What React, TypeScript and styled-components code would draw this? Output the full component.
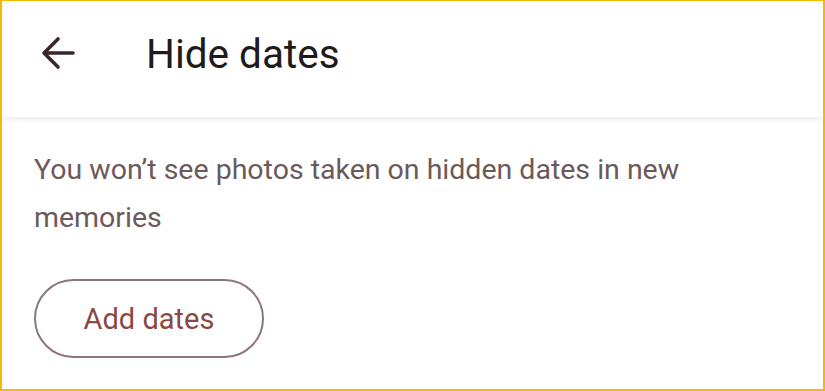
import React from 'react'
import styled, { createGlobalStyle } from 'styled-components'

// G L O B A L
const GlobalStyle = createGlobalStyle`
  html, body {
    margin: 0;
    padding: 0;
    background: #ffffff;
  }

  body {
    font-family: Roboto, "Noto Sans", "Liberation Sans", sans-serif;
    -webkit-font-smoothing: antialiased;
  }
`

// I C O N S
const BackArrow: React.FC = () => (
  <svg width='34' height='34' viewBox='0 0 34 34' fill='none'>
    <path
      d='M32 17H3M17 3L3 17L17 31'
      stroke='#3a2828'
      strokeWidth='3.6'
      strokeLinecap='round'
      strokeLinejoin='round'
    />
  </svg>
)

// C O M P O N E N T
export default function App () {
  return (
    <>
      <GlobalStyle />
      <Frame>
        <Header>
          <BackButton aria-label='Back'>
            <BackArrow />
          </BackButton>
          <Title>Hide dates</Title>
        </Header>
        <Content>
          <Description>
            You won’t see photos taken on hidden dates in new memories
          </Description>
          <OutlineButton>Add dates</OutlineButton>
        </Content>
      </Frame>
    </>
  )
}

// S T Y L E S
const Frame = styled.div`
  box-sizing: border-box;
  width: 825px;
  height: 391px;
  border: 2px solid #f7b900;
  border-top-width: 1px;
  background: #ffffff;
  display: flex;
  flex-direction: column;
  overflow: hidden;
`

const Header = styled.header`
  box-sizing: border-box;
  height: 116px;
  padding: 0 0 12px 39px;
  display: flex;
  align-items: center;
  background: #ffffff;
  box-shadow: 0 2px 6px rgba(0, 0, 0, 0.09);
  position: relative;
  z-index: 1;
`

const BackButton = styled.button`
  display: flex;
  align-items: center;
  justify-content: center;
  width: 34px;
  height: 34px;
  padding: 0;
  border: none;
  background: transparent;
  margin-right: 71px;
`

const Title = styled.h1`
  margin: 0;
  font-size: 40.5px;
  line-height: 1;
  font-weight: 400;
  color: #1f1b1b;
  transform: translateY(1px);
`

const Content = styled.main`
  flex: 1;
  display: flex;
  flex-direction: column;
  align-items: flex-start;
  padding: 29px 40px 0 32px;
`

const Description = styled.p`
  margin: 0 0 37px;
  max-width: 700px;
  font-size: 28.5px;
  line-height: 48px;
  color: #6b5a5a;
`

const OutlineButton = styled.button`
  box-sizing: border-box;
  width: 230px;
  height: 79px;
  border: 2px solid #8d7676;
  border-radius: 40px;
  background: transparent;
  font-family: Roboto, "Noto Sans", "Liberation Sans", sans-serif;
  font-size: 29px;
  font-weight: 400;
  color: #8a4843;
  padding: 0;
`
